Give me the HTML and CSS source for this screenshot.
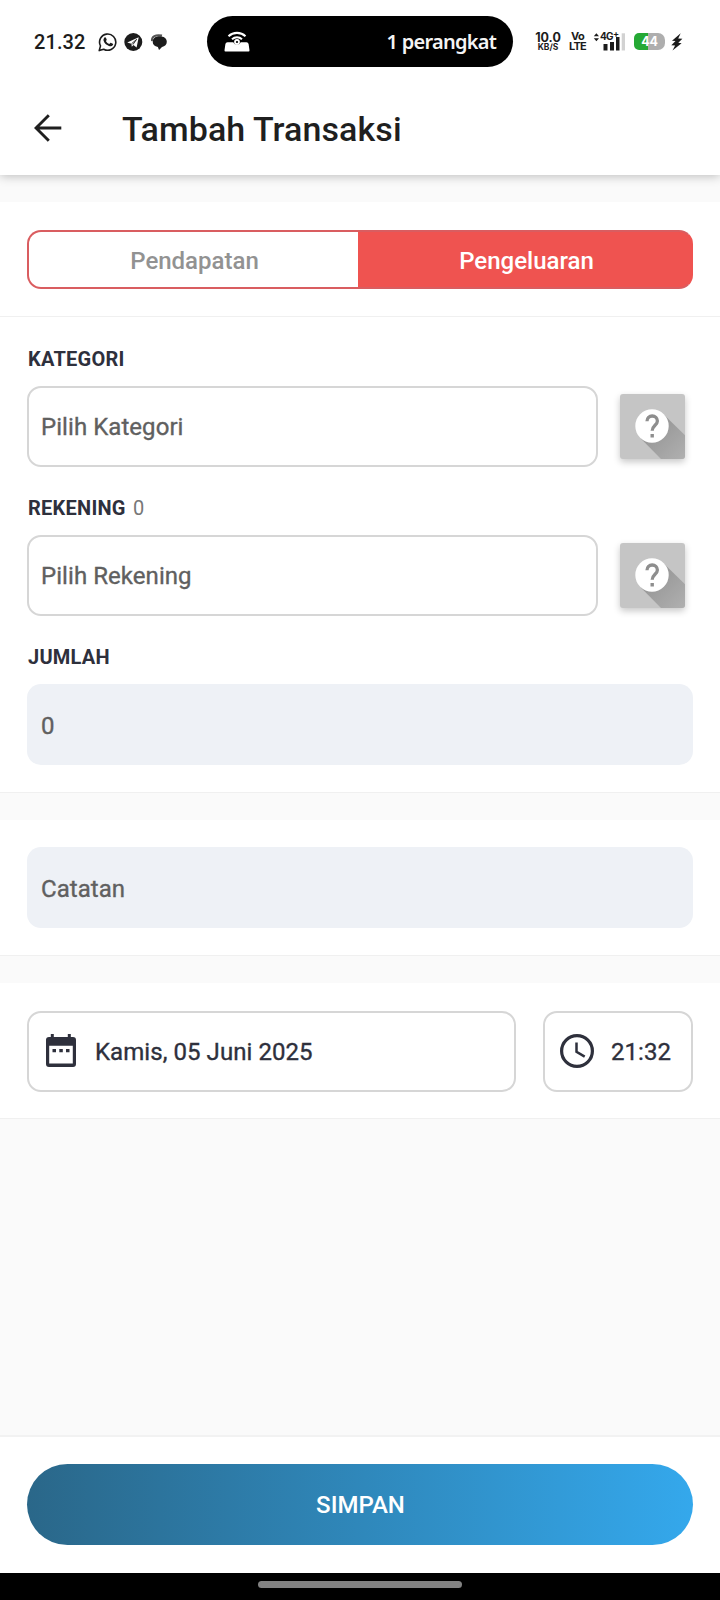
FILE: index.html
```html
<!DOCTYPE html>
<html lang="id">
<head>
<meta charset="utf-8">
<title>Tambah Transaksi</title>
<link rel="stylesheet" href="styles.css">
</head>
<body>
<div class="screen">
  <div class="statusbar">
    <span class="clock">21.32</span>
    <svg class="notif-icons" width="70" height="20" viewBox="0 0 70 20">
      <path d="M1.2 18.6 2.5 13.9A8.1 8.1 0 1 1 5.7 17.2Z" fill="none" stroke="#1c1c1c" stroke-width="1.6" stroke-linejoin="round"/>
      <path d="M6.3 5.7c.6-.7 1.3-.6 1.6 0l.8 1.8c.1.5-.2.8-.8 1.5.8 1.5 1.900 2.500 3.400 3.100l1-1.100c.3-.3.5-.3.9-.1l1.600.8c.5.3.4.8.1 1.400-.8 1.200-2.200 1.500-3.900.9-2.700-.9-4.700-2.900-5.400-5.200-.3-1.200 0-2.300.7-3.100Z" fill="#1c1c1c"/>
      <circle cx="35.300" cy="10" r="9" fill="#1c1c1c"/>
      <path d="M29.200 10.400 40.700 5.300 38.600 15.400 35.400 12.900 33.800 14.700 33.400 11.700Z" fill="#fff"/>
      <path d="m33.600 11.700 5-4.300-3.700 5.200" fill="none" stroke="#1c1c1c" stroke-width=".9"/>
      <path d="M54 9C53.300 4.500 57.700 2.200 64 3.600" fill="none" stroke="#555" stroke-width="2"/>
      <path d="M61.500 4.200c4.300 0 7.300 2.100 7.300 5.500 0 2.800-2 4.600-4.800 5.200L61 18l-1.100-3c-3.200-.6-5.200-2.600-5.200-5.300 0-3.400 2.800-5.500 6.800-5.500Z" fill="#1c1c1c"/>
    </svg>
    <div class="island">
      <svg width="26" height="22" viewBox="0 0 26 22">
        <path d="M4.500 5.200a12.500 12.500 0 0 1 17 0M8 8.200a7.800 7.800 0 0 1 10 0" fill="none" stroke="#fff" stroke-width="2.100"/>
        <path d="M3.500 11.300H9.300A3.900 3.900 0 0 0 16.700 11.300H22.500Q24.200 11.300 24.600 13L25.500 19.200Q25.600 20.500 24.600 20.500H1.400Q.4 20.500.5 19.200L1.400 13Q1.800 11.300 3.500 11.300Z" fill="#fff"/>
        <circle cx="13" cy="11" r="2" fill="none" stroke="#fff" stroke-width="1.800"/>
      </svg>
      <span>1 perangkat</span>
    </div>
    <div class="stack speed"><span>10.0</span><small>KB/S</small></div>
    <div class="stack volte"><span>Vo</span><span>LTE</span></div>
    <div class="signal">
      <svg width="34" height="20" viewBox="0 0 34 20">
        <path d="M.8 4.300 3.400 1.300 6 4.300ZM.8 6.200 3.400 9.200 6 6.200Z" fill="#1c1c1c"/>
        <path d="M10.500 12h4v6.500h-4ZM17 10h4v8.500h-4ZM23 5h3.500v13.500H23Z" fill="#1c1c1c"/>
        <path d="M28.700 1.300h3.300v17.200h-3.300Z" fill="#d2d2d2"/>
      </svg>
      <span class="net">4G<sup>+</sup></span>
    </div>
    <div class="battery">44</div>
    <svg class="bolt" width="12" height="18" viewBox="0 0 12 18"><path d="M9.700.3 1 7.800 4.500 8.100.3 12.300 4.100 12.600 1.500 17.500 10.600 10.200 7.300 9.700 11.400 5.800 7.200 5.600Z" fill="#1c1c1c"/></svg>
  </div>

  <header class="appbar">
    <svg width="28" height="28" viewBox="0 0 28 28"><path d="M27.300 14H2M14.800 1.200 2 14l12.800 12.800" fill="none" stroke="#1f1f1f" stroke-width="2.900"/></svg>
    <h1>Tambah Transaksi</h1>
  </header>

  <main>
    <section class="type">
      <div class="segmented">
        <button class="seg">Pendapatan</button>
        <button class="seg active">Pengeluaran</button>
      </div>
    </section>

    <section class="details">
      <div class="label">KATEGORI</div>
      <div class="row">
        <div class="field outlined">Pilih Kategori</div>
        <div class="help">
          <svg width="65" height="65" viewBox="0 0 65 65">
            <defs><linearGradient id="shade" x1="0" y1="0" x2="1" y2="1"><stop offset=".35" stop-color="#999"/><stop offset="1" stop-color="#b0b0b0"/></linearGradient></defs>
            <path d="M44 20.800 65 41.300V65H41L20.800 44.500Z" fill="url(#shade)"/>
            <circle cx="32" cy="32" r="16.700" fill="#fff"/>
            <path d="M27 27.300c0-3.200 2.300-5.300 5.200-5.300s5.200 2.100 5.200 5c0 4.200-5.200 4.500-5.200 9.800" fill="none" stroke="#8e8e8e" stroke-width="3.300"/>
            <path d="M30.500 40.100h3.400v3.400h-3.400Z" fill="#8e8e8e"/>
          </svg>
        </div>
      </div>
      <div class="label">REKENING <span>0</span></div>
      <div class="row">
        <div class="field outlined">Pilih Rekening</div>
        <div class="help">
          <svg width="65" height="65" viewBox="0 0 65 65">
            <path d="M44 20.800 65 41.300V65H41L20.800 44.500Z" fill="url(#shade)"/>
            <circle cx="32" cy="32" r="16.700" fill="#fff"/>
            <path d="M27 27.300c0-3.200 2.300-5.300 5.200-5.300s5.200 2.100 5.200 5c0 4.200-5.200 4.500-5.200 9.800" fill="none" stroke="#8e8e8e" stroke-width="3.300"/>
            <path d="M30.500 40.100h3.400v3.400h-3.400Z" fill="#8e8e8e"/>
          </svg>
        </div>
      </div>
      <div class="label">JUMLAH</div>
      <div class="field filled">0</div>
    </section>

    <section class="note">
      <div class="field filled">Catatan</div>
    </section>

    <section class="when">
      <div class="field outlined date">
        <svg width="32" height="36" viewBox="0 0 32 36">
          <path d="M5.800 1h3v3h14V1h3v3H28q3 0 3 3v24q0 3-3 3H4q-3 0-3-3V7q0-3 3-3h1.800ZM4.200 12.700V30.500h23.600V12.700Z" fill="#2e303c" fill-rule="evenodd"/>
          <path d="M7.500 16h3.500v3.300H7.500ZM14.300 16h3.500v3.300h-3.500ZM21 16h3.500v3.300H21Z" fill="#2e303c"/>
        </svg>
        <span>Kamis, 05 Juni 2025</span>
      </div>
      <div class="field outlined time">
        <svg width="34" height="34" viewBox="0 0 34 34"><circle cx="17" cy="17" r="15.400" fill="none" stroke="#2e303c" stroke-width="3.200"/><path d="M16.500 8.500v9.300l8.200 4.800" fill="none" stroke="#2e303c" stroke-width="2.500"/></svg>
        <span>21:32</span>
      </div>
    </section>
  </main>

  <footer><button class="save">SIMPAN</button></footer>
  <div class="navbar"><div class="handle"></div></div>
</div>
</body>
</html>
```
FILE: styles.css
```css
* { box-sizing: border-box; }
body { margin: 0; font-family: Roboto, "Liberation Sans", sans-serif; }
button { font: inherit; border: 0; padding: 0; margin: 0; }
svg { display: block; flex: none; }
.screen { width: 720px; height: 1600px; display: flex; flex-direction: column; background: #fafafa; overflow: hidden; }

.statusbar { position: relative; z-index: 1; height: 83px; flex: none; background: #fff; display: flex; align-items: center; padding-left: 34px; color: #1c1c1c; }
.clock { width: 64px; font-size: 20px; font-weight: 500; letter-spacing: .1px; }
.notif-icons { margin-right: 39px; }
.island { width: 306px; height: 51px; margin-right: 22px; padding: 0 17px; border-radius: 26px; background: #000; color: #f4f4f4; display: flex; align-items: center; justify-content: space-between; font: 600 20px "Noto Sans", sans-serif; letter-spacing: -.75px; flex: none; }
.stack { display: flex; flex-direction: column; align-items: center; font-weight: 700; font-family: Inter, sans-serif; flex: none; }
.speed { width: 26px; font-size: 12.500px; line-height: 11px; }
.speed small { font-size: 8.500px; line-height: 8px; }
.volte { width: 19px; margin-left: 7px; font-size: 11px; line-height: 9.500px; letter-spacing: -.7px; }
.signal { position: relative; width: 34px; margin-left: 6px; flex: none; }
.net { position: absolute; left: 7px; top: -1px; font: 700 10px/10px Inter, sans-serif; letter-spacing: -.7px; }
.net sup { font-size: 9px; line-height: 0; vertical-align: 3px; }
.battery { width: 31px; height: 17px; margin-left: 7px; border-radius: 5px 7px 7px 5px; background: linear-gradient(90deg, #25a934 45%, #aeaeae 45%); color: #fff; font: 700 12.500px/17px Inter, sans-serif; letter-spacing: -.3px; text-align: center; flex: none; }
.bolt { margin-left: 6px; }

.appbar { height: 92px; flex: none; background: #fff; display: flex; align-items: center; gap: 60px; padding: 0 34px 3px; box-shadow: 0 1px 10px rgba(0, 0, 0, .26); position: relative; }
.appbar h1 { margin: 3px 0 0; font-size: 34px; font-weight: 500; letter-spacing: .08px; color: #1f1f1f; }

main { flex: 1; }
section { background: #fff; border-bottom: 1.500px solid #f0f0f0; padding: 27px; }
.type { margin-top: 27px; height: 115px; padding-top: 28px; }
.segmented { display: flex; height: 59px; border: 2px solid #d95d60; border-right-color: #ef5350; border-radius: 14px; overflow: hidden; background: #ef5350; }
.seg { flex: none; width: 329px; padding: 2px 0 0 2px; background: #fff; color: #929292; font-size: 24px; font-weight: 500; }
.seg.active { flex: 1; padding-left: 4px; background: #ef5350; color: #fff; }

.details { height: 476px; padding-top: 23px; }
.label { height: 46px; padding: 7px 0 0 1px; font-size: 20px; line-height: 24px; font-weight: 700; letter-spacing: .25px; color: #2e303c; }
.label span { margin-left: 2px; font-weight: 400; color: #777; }
.row { display: flex; align-items: center; height: 81px; margin-bottom: 22px; gap: 22px; }
.field { height: 81px; border-radius: 14px; display: flex; align-items: center; padding: 2px 14px 0; font-size: 24px; letter-spacing: .06px; color: #606060; -webkit-text-stroke: .35px; }
.outlined { border: 2px solid #d6d6d6; padding: 1px 12px 0; }
.row .field { width: 571px; }
.filled { background: #eef1f6; }
.help { width: 65px; height: 65px; border-radius: 3px; overflow: hidden; background: #c5c5c5; box-shadow: 0 3px 7px rgba(0, 0, 0, .22); }
.note { margin-top: 27px; height: 136px; }
.when { margin-top: 27px; height: 136px; padding-top: 28px; display: flex; gap: 27px; }
.when .field { color: #2e303c; }
.date { flex: 1; gap: 18px; padding-left: 16px; }
.date svg { margin-top: -3px; }
.time { width: 150px; gap: 17px; padding-left: 15px; }
.time svg { margin-top: -2px; }

footer { height: 138px; flex: none; background: #fff; border-top: 2px solid #f2f2f2; padding: 27px; }
.save { display: block; width: 100%; height: 81px; padding: 1px 0 0 1px; border-radius: 41px; background: linear-gradient(90deg, #2a6789, #34a8ec); color: #fff; font-size: 24px; font-weight: 500; }
.navbar { height: 27px; flex: none; background: #000; display: flex; justify-content: center; padding-top: 8px; }
.handle { width: 204px; height: 7px; border-radius: 4px; background: #828282; }
```
